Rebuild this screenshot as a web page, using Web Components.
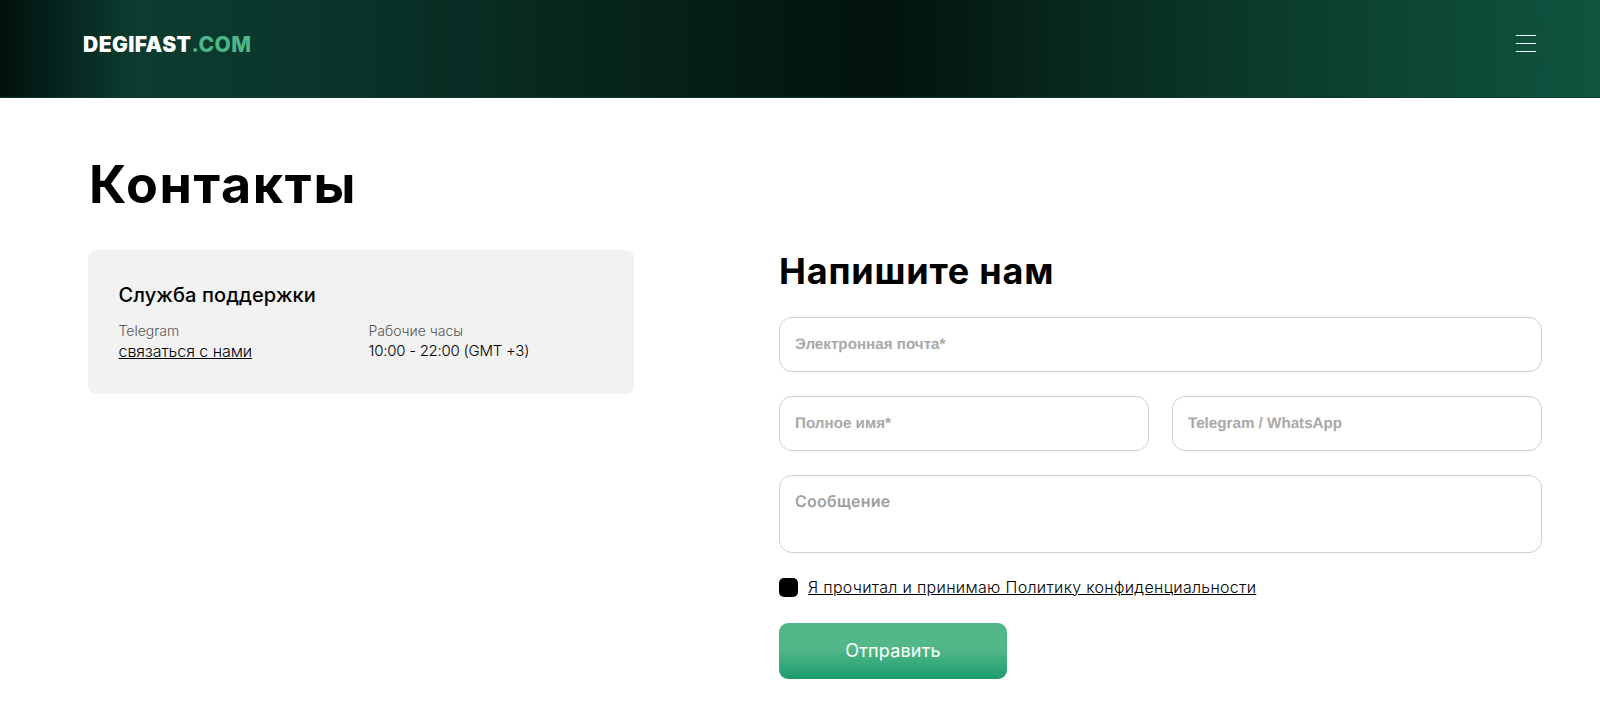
<!DOCTYPE html>
<html lang="ru"><head><meta charset="utf-8"><title>Контакты</title>
<style>
html,body{margin:0;padding:0;background:#fff}
body{font-family:Inter,"Open Sans",sans-serif;color:#000;width:1600px;height:703px;overflow:hidden}
</style></head><body>
<site-header></site-header>
<contacts-page>
  <support-card slot="left"></support-card>
  <contact-form slot="right"></contact-form>
</contacts-page>
<script>
function def(name,html){customElements.define(name,class extends HTMLElement{constructor(){super();this.attachShadow({mode:'open'}).innerHTML=html;}});}
def('site-header',`<style>
:host{display:flex;height:98px;box-sizing:border-box;align-items:center;justify-content:space-between;padding:0 53px 10px 83px;
background:linear-gradient(90deg,#020e0b 0,#05211b 50px,#0c3c30 135px,#0a3429 350px,#03130f 880px,#0a3529 1200px,#0f5540 1600px);border-bottom:1px solid #0d3a2e}
.logo{font:900 21px/1 Inter,sans-serif;color:#fff;letter-spacing:.45px;margin-top:2px}
.logo b{color:#4fb688;font-weight:800}
.burger{width:42px;height:42px;box-sizing:border-box;border:1px solid rgba(0,0,0,.05);border-radius:8px;display:flex;flex-direction:column;justify-content:center;align-items:center;gap:6.3px}
.burger i{display:block;width:20px;height:1.5px;background:#fff}
</style><div class="logo">DEGIFAST<b>.COM</b></div><div class="burger"><i></i><i></i><i></i></div>`);
def('contacts-page',`<style>
:host{display:block;padding:47px 58px 0 88px}
h1{margin:0;padding-left:1px;font:700 52px/80px Inter,sans-serif;letter-spacing:1.65px;height:105px}
.cols{display:flex;justify-content:space-between;align-items:flex-start}
</style><h1>Контакты</h1><div class="cols"><slot name="left"></slot><slot name="right"></slot></div>`);
def('support-card',`<style>
:host{display:block;width:546px;height:144px;box-sizing:border-box;background:#f2f2f2;border-radius:8px;padding:32px 30.5px 0}
h3{margin:0 0 13px;font:500 20px/26px Inter,sans-serif;letter-spacing:.1px}
.row{display:grid;grid-template-columns:250px 1fr}
.l{font:300 14px/20px Inter,sans-serif;color:#555}
.v{font:300 15px/20px Inter,sans-serif;color:#000;letter-spacing:-.25px}
a{color:#000;text-decoration:underline;font-size:16px;letter-spacing:-.05px}
</style><h3>Служба поддержки</h3><div class="row"><div><div class="l">Telegram</div><div class="v"><a href="#">связаться с нами</a></div></div><div><div class="l">Рабочие часы</div><div class="v">10:00 - 22:00 (GMT +3)</div></div></div>`);
def('form-field',`<style>
:host{display:block;flex:1;height:var(--h,55px);box-sizing:border-box;border:1px solid #cfcfcf;border-radius:13px;padding:var(--pt,17px) 15px 0;font:700 15.2px/20px "Liberation Sans",sans-serif;color:#a9a9a9;text-rendering:geometricPrecision}
</style><slot></slot>`);
def('contact-form',`<style>
:host{display:block;width:763px}
h2{margin:-2px 0 23px;font:700 36px/46px Inter,sans-serif;letter-spacing:.8px}
.row{display:flex;gap:24px;margin-bottom:24px}
.row.pair{gap:23px}
.ok{display:flex;align-items:center;gap:10px;margin:2px 0 26px;font:300 16px/20px Inter,sans-serif;letter-spacing:.3px}
.ok i{width:19px;height:19px;background:#000;border-radius:5px;display:block}
.ok a{color:#000}
button{display:block;width:228px;height:56px;border:0;border-radius:9px;background:linear-gradient(180deg,#53b888 0,#53b888 45%,#1c9c6e 100%);color:#fff;font:400 18px/1 Inter,sans-serif;letter-spacing:.2px;padding:0}
.msg{font:600 16px/20px Inter,sans-serif;letter-spacing:.25px;color:#a0a0a0}
</style><h2>Напишите нам</h2>
<div class="row"><form-field>Электронная почта*</form-field></div>
<div class="row pair"><form-field>Полное имя*</form-field><form-field>Telegram / WhatsApp</form-field></div>
<div class="row"><form-field style="--h:78px;--pt:15px"><span class="msg">Сообщение</span></form-field></div>
<div class="ok"><i></i><a href="#">Я прочитал и принимаю Политику конфиденциальности</a></div>
<button>Отправить</button>`);
</script></body></html>
